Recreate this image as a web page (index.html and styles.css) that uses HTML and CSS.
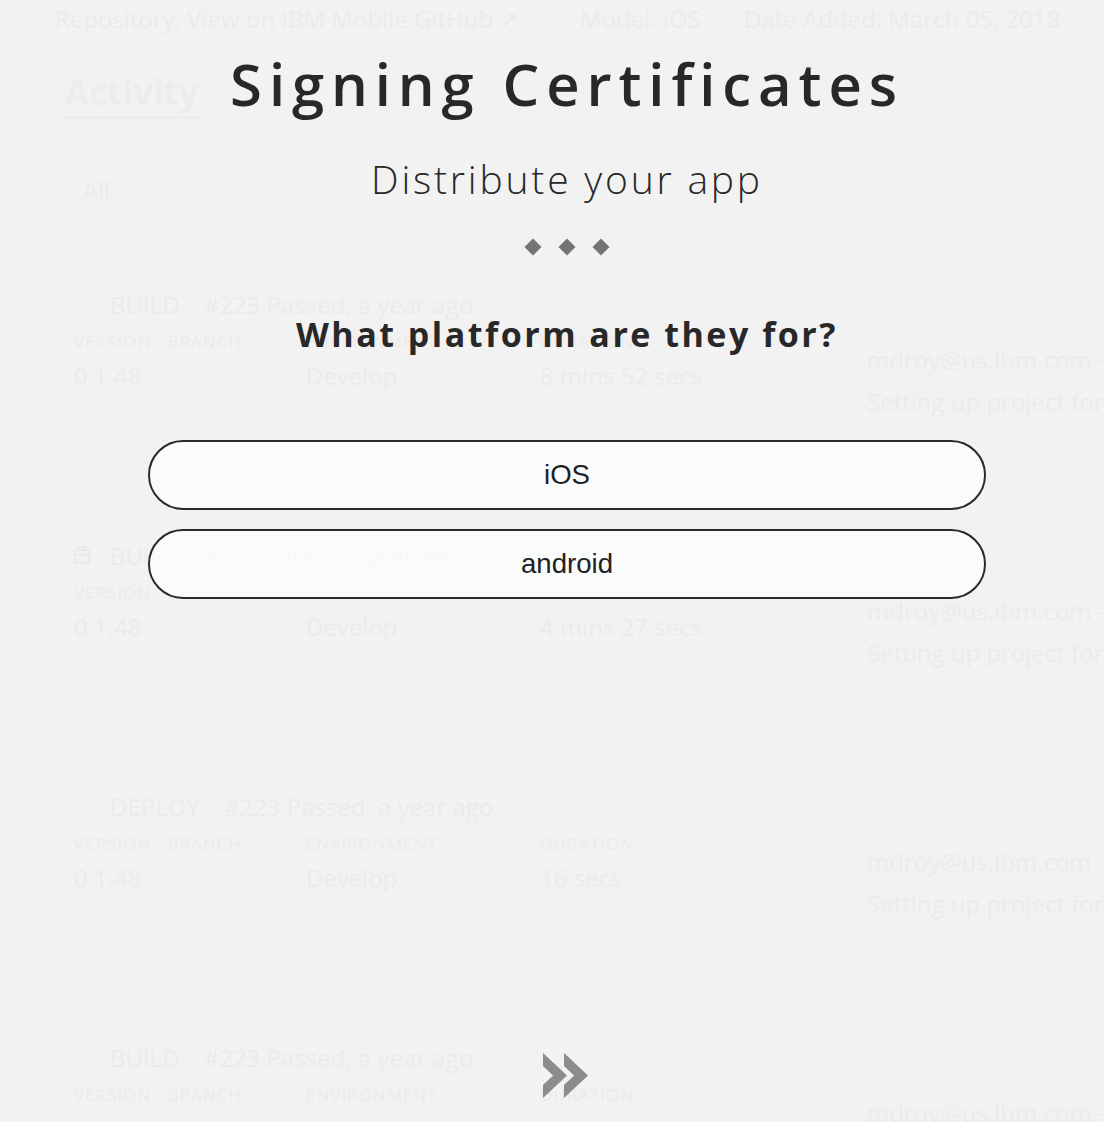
FILE: index.html
```html
<!DOCTYPE html>
<html lang="en">
<head>
<meta charset="utf-8">
<title>Signing Certificates</title>
<link rel="stylesheet" href="styles.css">
</head>
<body>
<div class="app">
  <div class="topbar">
    <span class="repo">Repository: View on IBM Mobile GitHub ↗</span>
    <span class="model">Model: iOS</span>
    <span class="date">Date Added: March 05, 2018</span>
  </div>
  <div class="tabs"><span class="tab">Activity</span></div>
  <div class="filter">All</div>
  <div class="feed">
    <div class="card">
      <div class="card-main">
        <div class="card-head"><span class="icon-slot"></span><span class="kind">BUILD</span><span class="status">#223 Passed, a year ago</span></div>
        <div class="card-grid labels"><span>VERSION &nbsp; BRANCH</span><span>ENVIRONMENT</span><span>DURATION</span></div>
        <div class="card-grid values"><span>0.1.48</span><span>Develop</span><span>8 mins 52 secs</span></div>
      </div>
      <div class="card-side"><div class="email">mdroy@us.ibm.com — Build #223</div><div class="msg">Setting up project for build and deploy</div></div>
    </div>
    <div class="card">
      <div class="card-main">
        <div class="card-head"><span class="icon-slot"><svg width="16" height="18" viewBox="0 0 16 18"><rect x="1" y="4" width="14" height="13" fill="none" stroke="currentColor" stroke-width="1.5"/><path d="M5 4V1h6v3M1 9h14" fill="none" stroke="currentColor" stroke-width="1.5"/></svg></span><span class="kind">BUILD</span><span class="status">#223 Failed, a year ago</span></div>
        <div class="card-grid labels"><span>VERSION &nbsp; BRANCH</span><span>ENVIRONMENT</span><span>DURATION</span></div>
        <div class="card-grid values"><span>0.1.48</span><span>Develop</span><span>4 mins 27 secs</span></div>
      </div>
      <div class="card-side"><div class="email">mdroy@us.ibm.com — Build #223</div><div class="msg">Setting up project for build and deploy</div></div>
    </div>
    <div class="card">
      <div class="card-main">
        <div class="card-head"><span class="icon-slot"></span><span class="kind">DEPLOY</span><span class="status">#223 Passed, a year ago</span></div>
        <div class="card-grid labels"><span>VERSION &nbsp; BRANCH</span><span>ENVIRONMENT</span><span>DURATION</span></div>
        <div class="card-grid values"><span>0.1.48</span><span>Develop</span><span>16 secs</span></div>
      </div>
      <div class="card-side"><div class="email">mdroy@us.ibm.com — Deploy #223</div><div class="msg">Setting up project for build and deploy</div></div>
    </div>
    <div class="card card-last">
      <div class="card-main">
        <div class="card-head"><span class="icon-slot"></span><span class="kind">BUILD</span><span class="status">#223 Passed, a year ago</span></div>
        <div class="card-grid labels"><span>VERSION &nbsp; BRANCH</span><span>ENVIRONMENT</span><span>DURATION</span></div>
      </div>
      <div class="card-side"><div class="email">mdroy@us.ibm.com — Build #223</div></div>
    </div>
  </div>
</div>

<div class="overlay">
  <div class="modal">
    <h1 class="title">Signing Certificates</h1>
    <p class="subtitle">Distribute your app</p>
    <div class="dots"><span class="dot"></span><span class="dot"></span><span class="dot"></span></div>
    <h2 class="question">What platform are they for?</h2>
    <div class="options">
      <button class="option">iOS</button>
      <button class="option">android</button>
    </div>
    <div class="next">
      <svg width="46" height="46" viewBox="0 0 46 46" aria-hidden="true">
        <polygon points="0,0 24,22.5 0,45 0,32 10.1,22.5 0,13" fill="currentColor"/>
        <polygon points="21,0 45,22.5 21,45 21,32 31.1,22.5 21,13" fill="currentColor"/>
      </svg>
    </div>
  </div>
</div>
</body>
</html>
```

FILE: styles.css
```css
* { box-sizing: border-box; }
html, body {
  margin: 0;
  padding: 0;
}
html { overflow: hidden; }
body {
  width: 1104px;
  height: 1122px;
  overflow: hidden;
  background: #f2f2f2;
  font-family: "Open Sans", "Noto Sans", sans-serif;
  position: relative;
}

/* faint background page */
.app {
  color: #ebebeb;
  font-size: 24px;
  height: 1122px;
  overflow: hidden;
}
.topbar {
  display: flex;
  height: 36px;
  align-items: center;
  padding-left: 55px;
  white-space: nowrap;
}
.repo { width: 525px; }
.model { width: 164px; }
.tabs {
  padding: 34px 0 0 65px;
  height: 120px;
}
.tab {
  display: inline-block;
  font-size: 35px;
  font-weight: 700;
  line-height: 44px;
  padding-bottom: 2px;
  border-bottom: 3px solid #ececec;
  color: #ececec;
}
.filter {
  padding-left: 83px;
  font-size: 24px;
  line-height: 30px;
  margin-top: 19px;
}
.feed {
  margin-top: 85px;
  padding-left: 74px;
}
.card {
  display: flex;
  height: 251px;
  white-space: nowrap;
}
.card-last { height: 130px; }
.card-main {
  width: 793px;
  flex-shrink: 0;
}
.card-head {
  display: flex;
  align-items: center;
  height: 28px;
  font-size: 24px;
}
.icon-slot {
  width: 36px;
  display: flex;
  align-items: center;
  color: #e8e8e8;
}
.kind {
  margin-right: 24px;
}
.card-grid {
  display: grid;
  grid-template-columns: 232px 234px 1fr;
}
.labels {
  margin-top: 14px;
  font-size: 17px;
  line-height: 20px;
  letter-spacing: 1px;
}
.values {
  margin-top: 10px;
  font-size: 24px;
  line-height: 28px;
}
.card-side {
  padding-top: 56px;
  font-size: 24px;
  line-height: 28px;
}
.msg { margin-top: 14px; }

/* modal */
.overlay {
  position: absolute;
  inset: 0;
}
.modal {
  margin-left: 148px;
  width: 838px;
  padding-top: 54px;
  display: flex;
  flex-direction: column;
  align-items: center;
  color: #282828;
}
.title {
  margin: 0;
  font-size: 58px;
  line-height: 60px;
  font-weight: 600;
  letter-spacing: 6.9px;
  white-space: nowrap;
}
.subtitle {
  margin: 43px 0 0;
  font-size: 39px;
  line-height: 44px;
  font-weight: 300;
  letter-spacing: 2.8px;
}
.dots {
  margin-top: 40px;
  display: flex;
  gap: 22.3px;
}
.dot {
  width: 12px;
  height: 12px;
  background: #747474;
  transform: rotate(45deg);
}
.question {
  margin: 61px 0 0;
  font-size: 34px;
  line-height: 40px;
  font-weight: 700;
  letter-spacing: 2.5px;
}
.options {
  margin-top: 86px;
  width: 100%;
  display: flex;
  flex-direction: column;
  gap: 19px;
}
.option {
  height: 70px;
  width: 100%;
  border: 2px solid #2a2a2a;
  border-radius: 35px;
  background: rgba(252, 253, 253, 0.75);
  font-family: "Liberation Sans", Arial, sans-serif;
  font-size: 27.6px;
  color: #222;
  padding: 0;
}
.next {
  margin-top: 454px;
  color: #8c8c8c;
  line-height: 0;
  margin-left: -3px;
}
```
